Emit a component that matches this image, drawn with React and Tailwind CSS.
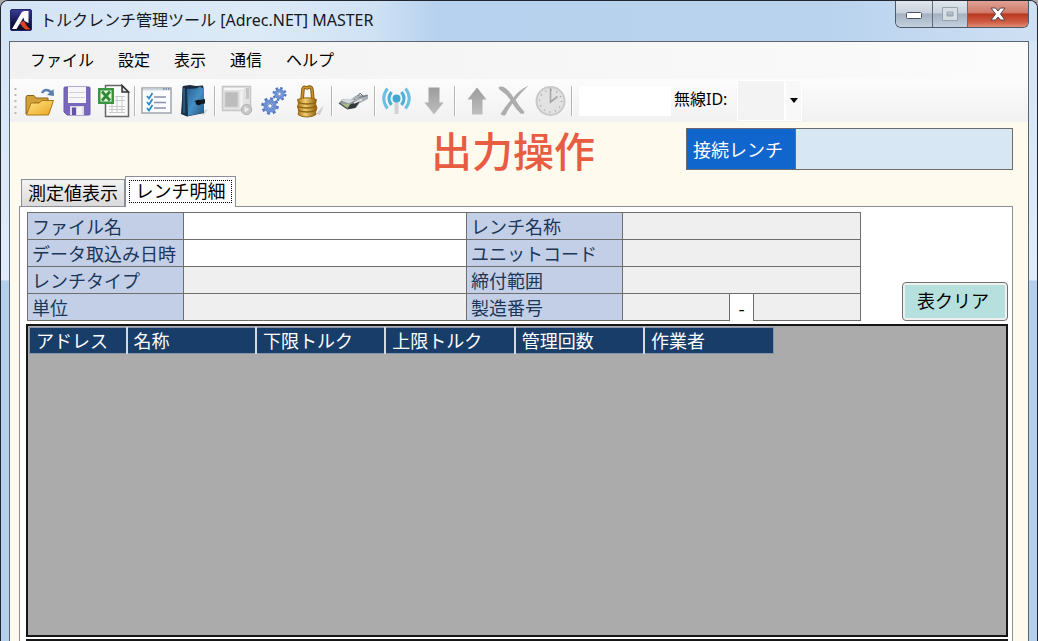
import React from "react";

const uiFont = "font-['Noto_Sans','Noto_Sans_CJK_JP',sans-serif]";
const gothic = "font-['Noto_Sans_CJK_JP',sans-serif]";

function AppLogo() {
  return (
    <svg width="22" height="22" viewBox="0 0 22 22" aria-hidden="true">
      <defs>
        <linearGradient id="logo" x1="0" y1="0" x2="0" y2="1">
          <stop offset="0" stopColor="#3a3d9a" />
          <stop offset="0.6" stopColor="#14164a" />
          <stop offset="1" stopColor="#0a0a20" />
        </linearGradient>
      </defs>
      <rect x="0.5" y="0.5" width="21" height="21" rx="1.5" fill="url(#logo)" stroke="#23246b" />
      <path d="M2 20 L11.5 3.5 Q12.5 2 14.5 2 L18.5 2 L18.5 14 L14.5 12 L13.5 8.5 L6.5 20 Z" fill="#fff" />
      <path d="M9.5 13.5 L14 12 Q16 17 20.5 20.5 L15.5 20.5 Q12 18 9.5 13.5 Z" fill="#e0431f" />
    </svg>
  );
}

function OpenIcon() {
  return (
    <svg width="32" height="32" viewBox="0 0 32 32" aria-hidden="true">
      <defs>
        <linearGradient id="fold" x1="0" y1="0" x2="1" y2="1">
          <stop offset="0" stopColor="#ffe58a" />
          <stop offset="1" stopColor="#eba61e" />
        </linearGradient>
      </defs>
      <path d="M2 29 V12 L3 10.5 H10 L12 13 H24 V18 H10 Z" fill="#d3a13a" stroke="#8a651c" />
      <path d="M2.5 30 L7 18 H15 L18 15.5 H29.5 L24.500 30 Z" fill="url(#fold)" stroke="#a87816" />
      <path d="M18 8 Q21 2.500 27 7" fill="none" stroke="#5a7fae" strokeWidth="2.5" />
      <path d="M23 10 L30 11 L29.5 4 Z" fill="#5a7fae" />
    </svg>
  );
}

function SaveIcon() {
  return (
    <svg width="28" height="30" viewBox="0 0 28 30" aria-hidden="true">
      <path d="M1 2 Q1 1 2 1 H26 Q27 1 27 2 V28 Q27 29 26 29 H4 L1 26 Z" fill="#7868bd" stroke="#6a59ab" />
      <rect x="5" y="1" width="18" height="16" fill="#f7f7fb" />
      <path d="M6 6.5 H22 M6 11.5 H22" stroke="#cfcfd8" />
      <rect x="7" y="20" width="14" height="9" fill="#dcdce4" />
      <rect x="9" y="21.5" width="4" height="7.5" fill="#6552a6" />
      <rect x="14" y="21" width="5" height="8" fill="#f3f3f7" />
    </svg>
  );
}

function ExcelIcon() {
  return (
    <svg width="33" height="34" viewBox="0 0 33 34" aria-hidden="true">
      <path d="M8.5 1.5 H25 L31.5 8 V32.5 H8.5 Z" fill="#fafafa" stroke="#666" strokeWidth="1.5" />
      <path d="M25 1.5 V8 H31.5 Z" fill="#ddd" stroke="#333" strokeWidth="1.5" />
      <path d="M12 22.500 H28 M12 25.500 H28 M12 28.500 H28 M15 20 V29 M20 12 V29 M25 12 V29 M18 12.500 H28 M18 16.500 H28" stroke="#c9c9c9" fill="none" />
      <rect x="1" y="4" width="16" height="16" fill="#3d9440" />
      <rect x="3.5" y="6.5" width="11" height="11" fill="#e5f3e5" />
      <path d="M5 7.500 L13 16.500 M13 7.500 L5 16.500" stroke="#2d8a33" strokeWidth="2.8" />
    </svg>
  );
}

function ListIcon() {
  return (
    <svg width="31" height="27" viewBox="0 0 31 27" aria-hidden="true">
      <rect x="1" y="1" width="29" height="25" fill="#fbfcfe" stroke="#a0a5ac" strokeWidth="1.5" />
      <path d="M2 2.5 H29" stroke="#d2d7de" strokeWidth="2" />
      <path d="M22 2 H29" stroke="#667fae" strokeWidth="1.5" strokeDasharray="1.5 1" />
      <path d="M13 10 H25 M13 15.5 H25 M13 21 H25" stroke="#8d8fae" strokeWidth="1.5" />
      <path d="M6 9 L8 11.5 L11.5 6 M6 15 L8 17.5 L11.5 12 M6 21 L8 23.5 L11.5 18" stroke="#2688c7" strokeWidth="1.7" fill="none" />
    </svg>
  );
}

function BookIcon() {
  return (
    <svg width="30" height="34" viewBox="0 0 30 34" aria-hidden="true">
      <defs>
        <linearGradient id="book" x1="0" y1="0" x2="1" y2="1">
          <stop offset="0" stopColor="#2a5c8c" />
          <stop offset="0.5" stopColor="#4590c4" />
          <stop offset="1" stopColor="#235680" />
        </linearGradient>
      </defs>
      <path d="M20 29 L29 25 L25 31 Z" fill="#d3d3d6" />
      <path d="M4 2 L11 1 L17 2 L24 1.500 L25 6 V29 L8 32.5 L2 30 Z" fill="#1c2b3c" />
      <path d="M8 5 L17 4.500 L21 2.500 L25 5 V28.500 L9 32 Z" fill="url(#book)" />
      <path d="M3.5 2.500 L8 5.500 V31.500 L3 29.500 Z" fill="#16344f" />
      <path d="M5 4 V29" stroke="#3f7cab" />
      <path d="M15 17 L26 15 V19.5 L20 20.5 Z" fill="#161c24" />
      <circle cx="19.500" cy="18.5" r="2.800" fill="#10151b" />
    </svg>
  );
}

function PanelIcon() {
  return (
    <svg width="32" height="31" viewBox="0 0 32 31" aria-hidden="true">
      <rect x="1.500" y="1.5" width="28" height="24" fill="#e3e3e3" stroke="#c6c6c6" strokeWidth="1.5" />
      <rect x="4" y="7" width="13" height="15" fill="#bdbdbd" stroke="#cfcfcf" />
      <path d="M20.500 6 V23 M3 4 H23" stroke="#f6f6f6" strokeWidth="2" />
      <rect x="25" y="3" width="3" height="11" fill="#c3c3c3" />
      <circle cx="25.5" cy="24.5" r="5.200" fill="#c6c6c6" stroke="#b3b3b3" />
      <path d="M23.5 21.5 L28.5 24.5 L23.5 27.5 Z" fill="#ededed" />
    </svg>
  );
}

function GearsIcon() {
  return (
    <svg width="26" height="30" viewBox="0 0 26 30" aria-hidden="true">
      <circle cx="9" cy="20" r="7.3" fill="none" stroke="#5478c0" strokeWidth="3" strokeDasharray="2.9 2.83" />
      <circle cx="9" cy="20" r="4.7" fill="none" stroke="#6e8fd6" strokeWidth="3.8" />
      <circle cx="9" cy="20" r="2.3" fill="#f4f7fd" stroke="#4468b4" />
      <circle cx="18.5" cy="8" r="5.7" fill="none" stroke="#4e72bc" strokeWidth="2.6" strokeDasharray="2.3 2.18" />
      <circle cx="18.5" cy="8" r="3.7" fill="none" stroke="#6e8fd6" strokeWidth="3" />
      <circle cx="18.5" cy="8" r="1.7" fill="#f4f7fd" stroke="#4468b4" strokeWidth="0.8" />
    </svg>
  );
}

function LockIcon() {
  return (
    <svg width="29" height="34" viewBox="0 0 29 34" aria-hidden="true">
      <defs>
        <linearGradient id="lock" x1="0" y1="0" x2="1" y2="0">
          <stop offset="0" stopColor="#a87112" />
          <stop offset="0.4" stopColor="#f0cd70" />
          <stop offset="1" stopColor="#8a5a0a" />
        </linearGradient>
      </defs>
      <path d="M20 30 L28 21 L24 31 Z" fill="#cfcfcf" />
      <path d="M6 17 L7 5 Q8 2.500 10 3.500 Q11.500 4.500 13 3 Q15.500 2.500 16 6 L17 17" fill="none" stroke="#8b5e10" strokeWidth="3.6" />
      <path d="M6 17 L7 5 Q8 2.500 10 3.500 Q11.500 4.500 13 3 Q15.500 2.500 16 6 L17 17" fill="none" stroke="#c9952c" strokeWidth="1.600" />
      <path d="M1.5 15.5 Q11 12 20.5 15.5 L19.500 20 L21 24 L19.500 28 L20 30.500 Q17 33 11 33 Q5 33 2 30.500 L3 27 L1.500 23 L2.500 19 Z" fill="url(#lock)" stroke="#97680f" />
      <path d="M2 18.500 Q11 21.500 20 18.500 M2 22.500 Q11 25.500 20 22.500 M2 26.500 Q11 29.500 20 26.500" fill="none" stroke="#8f620f" strokeWidth="1.3" />
    </svg>
  );
}

function PlugIcon() {
  return (
    <svg width="31" height="20" viewBox="0 0 31 20" aria-hidden="true">
      <path d="M1 12 L4 8.500 L13 8 L20 6 L23 10 L18 17 L9 18 Z" fill="#8d9497" />
      <path d="M3 9.500 L9 7.500 L17 9 L11 12.500 Z" fill="#d3d9dc" />
      <path d="M15 6.500 L20 3.500 L23 4 L30 3.500 L30 8 L22 12 L17 9 Z" fill="#a9b0b5" />
      <path d="M20 5 L22 2 L25 5 M21 6.500 L29.500 4.500" stroke="#6d7478" fill="none" />
      <path d="M3 12.500 L13 13 L10 16.500 L5 15.500 Z" fill="#a8ba8a" />
      <path d="M12 13.500 L22 10 L17 17 L9 18.500 Z" fill="#33383b" />
      <path d="M16 12 L24 8.500" stroke="#e1e5e8" strokeWidth="1.500" />
      <path d="M1 12 L9 17.500" stroke="#4e5557" strokeWidth="1.500" />
    </svg>
  );
}

function AntennaIcon() {
  return (
    <svg width="29" height="30" viewBox="0 0 29 30" className="shrink-0" aria-hidden="true">
      <path d="M14.5 15 V28" stroke="#d0d3d5" strokeWidth="4" />
      <circle cx="14.5" cy="12.5" r="4" fill="#41a8d4" />
      <path d="M9.5 6 Q4.500 12.500 9.5 19 M19.500 6 Q24.500 12.500 19.500 19" fill="none" stroke="#4db0da" strokeWidth="3.200" />
      <path d="M5.500 2.500 Q-2 12.500 5.500 22.500 M23.500 2.500 Q31 12.500 23.500 22.500" fill="none" stroke="#6dc0e2" strokeWidth="3" />
    </svg>
  );
}

function ArrowIcon({ up }) {
  return (
    <svg width="20" height="28" viewBox="0 0 20 28" aria-hidden="true">
      <defs>
        <linearGradient id="arrow" x1="0" y1="0" x2="0" y2="1">
          <stop offset="0" stopColor="#9c9c9c" />
          <stop offset="1" stopColor="#bebebe" />
        </linearGradient>
      </defs>
      {up ? (
        <path d="M10 0.5 L19.500 12.5 H15.5 V27.5 H5 V12.5 H0.500 Z" fill="url(#arrow)" />
      ) : (
        <path d="M4.500 0.5 H15.500 V15.5 H19.500 L10 27.5 L0.500 15.5 H4.500 Z" fill="url(#arrow)" />
      )}
    </svg>
  );
}

function CrossIcon() {
  return (
    <svg width="31" height="31" viewBox="0 0 31 31" aria-hidden="true">
      <path d="M0.500 2.500 Q4 0 8 3.5 Q13 8 15.5 12.5 Q21 5 30.500 0.500 Q23 7.5 17.5 15 Q21 21 26.500 27 L25.500 29 L22.500 28.500 Q18 24.5 14.5 18.500 Q9.500 25 7.500 30 Q5 31.500 2.500 29 Q7 22 12.500 15.5 Q9 9.500 3.500 6 Q1.500 5.500 0.500 2.500 Z" fill="#adadad" />
    </svg>
  );
}

function ClockIcon() {
  return (
    <svg width="31" height="32" viewBox="0 0 31 32" aria-hidden="true">
      <circle cx="15.5" cy="16" r="14" fill="#e2e2e2" stroke="#c9c9c9" strokeWidth="2" />
      <circle cx="15.5" cy="16" r="11" fill="none" stroke="#a6a6a6" strokeWidth="1.4" strokeDasharray="1.2 4.56" />
      <path d="M15.5 3 V17 L22.5 11.5" fill="none" stroke="#a6a6a6" strokeWidth="1.6" />
    </svg>
  );
}

const UpIcon = () => <ArrowIcon up />;

const toolGroups = [
  [["開く", OpenIcon], ["保存", SaveIcon], ["Excel出力", ExcelIcon]],
  [["一覧", ListIcon], ["終了", BookIcon]],
  [["画面", PanelIcon], ["設定", GearsIcon], ["ロック", LockIcon]],
  [["接続", PlugIcon]],
  [["無線", AntennaIcon], ["受信", ArrowIcon]],
  [["送信", UpIcon], ["削除", CrossIcon], ["時刻", ClockIcon]],
];

function TitleBar() {
  const btn = "flex items-center justify-center border-r border-[#5f6b7c]";
  const glass = "bg-[linear-gradient(#e0e6ed_0%,#c9d2dc_45%,#a4b1c0_50%,#c3d0de_100%)]";
  return (
    <header className="flex h-10 shrink-0 items-start bg-[linear-gradient(90deg,#d3e4f5_0%,#dceaf7_25%,#cfe2f4_36%,#b7d2ee_42%,#b9d3ee_80%,#cfe0f3_100%)] pl-[9px] pr-2">
      <div className="flex h-[38px] flex-1 items-center gap-2">
        <AppLogo />
        <h1 className={`whitespace-nowrap text-base text-[#15181d] ${uiFont}`}>トルクレンチ管理ツール [Adrec.NET] MASTER</h1>
      </div>
      <div className="flex h-[27px] overflow-hidden rounded-b-md border border-t-0 border-[#4d5868]">
        <button aria-label="最小化" className={`w-[37px] pt-1 ${btn} ${glass}`}>
          <svg width="16" height="8" viewBox="0 0 16 8"><rect x="0.5" y="0.5" width="15" height="6" rx="1" fill="#fff" stroke="#4c5263" /></svg>
        </button>
        <button aria-label="最大化" className={`w-[35px] ${btn} ${glass}`}>
          <svg width="16" height="14" viewBox="0 0 16 14"><path d="M0.5 0.5 H15.5 V13.5 H0.5 Z M5 5 V9 H11 V5 Z" fill="#d7dde4" stroke="#98a2ad" fillRule="evenodd" /></svg>
        </button>
        <button aria-label="閉じる" className="flex w-[60px] items-center justify-center bg-[linear-gradient(#e0a195_0%,#d17a69_45%,#b93720_50%,#cf5b42_80%,#e08e74_100%)]">
          <svg width="16" height="14" viewBox="0 0 16 14"><path d="M1 1 H5.5 L8 4 L10.5 1 H15 L10.5 7 L15 13 H10.5 L8 10 L5.5 13 H1 L5.5 7 Z" fill="#fff" stroke="#55434c" strokeLinejoin="round" /></svg>
        </button>
      </div>
    </header>
  );
}

function Toolbar() {
  return (
    <div role="toolbar" className="flex h-[43px] shrink-0 items-center bg-[linear-gradient(#fcfcfc,#f1f1f2)] pl-1">
      <svg width="7" height="30" viewBox="0 0 7 30" aria-hidden="true"><path d="M1.5 2 V28" stroke="#b9b9b9" strokeWidth="2" strokeDasharray="2 4" /></svg>
      {toolGroups.map((group, g) => (
        <div key={g} className="flex h-full shrink-0 items-center">
          {group.map(([name, Icon]) => (
            <button key={name} aria-label={name} className="flex h-9 w-[37px] items-center justify-center"><Icon /></button>
          ))}
          <span className="mx-[2px] h-[30px] w-[2px] border-l border-[#b4b4b4] bg-white" />
        </div>
      ))}
      <input aria-label="機器" className="ml-1 mr-[3px] h-[30px] w-[92px] bg-white outline-none" />
      <label htmlFor="rid" className={`whitespace-nowrap pb-1 text-base text-black ${uiFont}`}>無線ID:</label>
      <div className="relative ml-[10px] h-[41px] w-[65px]">
        <select id="rid" className="h-full w-full appearance-none border border-white bg-[linear-gradient(90deg,#f3f3f3_46px,#fff_46px,#fff_48px,#f8f8f8_48px)] outline-none" />
        <svg className="pointer-events-none absolute right-1 top-[18px]" width="8" height="5" viewBox="0 0 8 5"><path d="M0 0 H8 L4 5 Z" fill="#000" /></svg>
      </div>
    </div>
  );
}

const line = "border-[#6e6e6e]";

function Label({ id, last, children }) {
  return (
    <label htmlFor={id} className={`flex items-center overflow-hidden whitespace-nowrap border-l border-t bg-[#c3cfe6] pl-1 text-lg leading-6 text-[#1b3658] ${line} ${last ? "border-b" : ""}`}>
      {children}
    </label>
  );
}

function Field({ id, white, last, name }) {
  return (
    <input id={id} aria-label={name} readOnly={!white} className={`h-full w-full min-w-0 border-l border-t px-1 text-base leading-5 outline-none ${line} ${white ? "bg-white" : "bg-[#efefef]"} ${last ? "border-b" : ""}`} />
  );
}

function WrenchForm() {
  return (
    <form className={`grid h-[109px] flex-1 grid-cols-[156px_minmax(0,1fr)_156px_238px] grid-rows-[27px_27px_27px_28px] border-r ${line}`}>
      <Label id="file">ファイル名</Label><Field id="file" white />
      <Label id="wname">レンチ名称</Label><Field id="wname" />
      <Label id="date">データ取込み日時</Label><Field id="date" white />
      <Label id="unitcode">ユニットコード</Label><Field id="unitcode" />
      <Label id="type">レンチタイプ</Label><Field id="type" />
      <Label id="range">締付範囲</Label><Field id="range" />
      <Label id="unit" last>単位</Label><Field id="unit" last />
      <Label id="serial" last>製造番号</Label>
      <div className="grid grid-cols-[1fr_24px_1fr] grid-rows-[28px]">
        <Field id="serial" last />
        <span className={`flex items-center justify-center border-l border-t text-lg leading-6 text-black ${line}`}>-</span>
        <Field name="製造番号 枝番" last />
      </div>
    </form>
  );
}

const columns = ["アドレス", "名称", "下限トルク", "上限トルク", "管理回数", "作業者"];

export default function App() {
  return (
    <div className="h-screen overflow-hidden bg-[#a9a9a9]">
      <div className="flex h-full flex-col overflow-hidden rounded-t-lg border-x border-t border-[#23252f] bg-[linear-gradient(#d3e4f5_0px,#dfebf8_279px,#b3cfec_280px)]">
        <TitleBar />
        <div className="flex min-h-0 flex-1 px-2">
          <div className="flex min-w-0 flex-1 flex-col border-x border-t border-[#5b6675] bg-[#fffaee]">
            <nav className={`flex h-[37px] shrink-0 items-center bg-[linear-gradient(90deg,#f1f1f1,#fbfbfb)] pb-[2px] pl-2 text-base text-black ${uiFont}`}>
              {["ファイル", "設定", "表示", "通信", "ヘルプ"].map((m) => (
                <button key={m} className="px-3">{m}</button>
              ))}
            </nav>
            <Toolbar />
            <main className={`flex min-h-0 flex-1 flex-col pl-[9px] pr-[15px] ${gothic}`}>
              <div className="flex h-[54px] shrink-0 items-start justify-end pt-[6px]">
                <h2 className="mr-[91px] whitespace-nowrap text-[41px] font-medium leading-[42px] text-[#e85c41]">出力操作</h2>
                <div className="flex h-[42px] w-[327px] border border-[#6c6c6c]">
                  <label htmlFor="wrench" className="flex w-[109px] items-center border-r border-[#6c6c6c] bg-[#1066cc] pl-[6px] text-lg text-white">接続レンチ</label>
                  <input id="wrench" className="min-w-0 flex-1 bg-[#d8e7f4] px-2 text-lg outline-none" />
                </div>
              </div>
              <div role="tablist" className="z-10 -mb-px flex shrink-0 items-end pl-[2px] text-lg leading-6 text-black">
                <button role="tab" aria-selected="false" className="mb-px h-[27px] w-[104px] whitespace-nowrap border border-b-0 border-[#8b8e98] bg-[linear-gradient(#f3f3f3,#dadada)] pb-1">測定値表示</button>
                <button role="tab" aria-selected="true" className="h-[31px] w-[111px] whitespace-nowrap border border-b-0 border-[#8b8e98] bg-white p-[3px] pb-1">
                  <span className="flex h-full items-center justify-center border border-dotted border-black pb-1 leading-none">レンチ明細</span>
                </button>
              </div>
              <section role="tabpanel" className="flex min-h-0 flex-1 flex-col border-x border-t border-[#8b8e98] bg-white pl-[6px] pr-1 pt-[5px]">
                <div className="flex shrink-0 items-end gap-[41px] pl-px">
                  <WrenchForm />
                  <button className="h-[39px] w-[106px] rounded border border-[#707070] bg-[#f0f0f0] p-[2px]">
                    <span className="flex h-full items-center justify-center bg-[#b6e0de] pb-1 pr-1 text-lg leading-none text-black">表クリア</span>
                  </button>
                </div>
                <div className="mt-[3px] min-h-0 flex-1 border-2 border-[#161616] bg-[#ababab] pl-px pt-px">
                  <table className="w-[745px] table-fixed border-collapse">
                    <thead>
                      <tr className="h-[26px] border border-[#8796ab] bg-[#193d69] text-left text-lg leading-[22px] text-white">
                        {columns.map((c) => (
                          <th key={c} className="whitespace-nowrap border-r-2 border-[#d5dae2] p-0 pb-[2px] pl-[6px] font-normal first:w-[97px] last:border-r-0">{c}</th>
                        ))}
                      </tr>
                    </thead>
                    <tbody />
                  </table>
                </div>
                <div className="mt-[2px] h-[2px] shrink-0 border-t-2 border-[#161616]" />
              </section>
            </main>
          </div>
        </div>
      </div>
    </div>
  );
}
